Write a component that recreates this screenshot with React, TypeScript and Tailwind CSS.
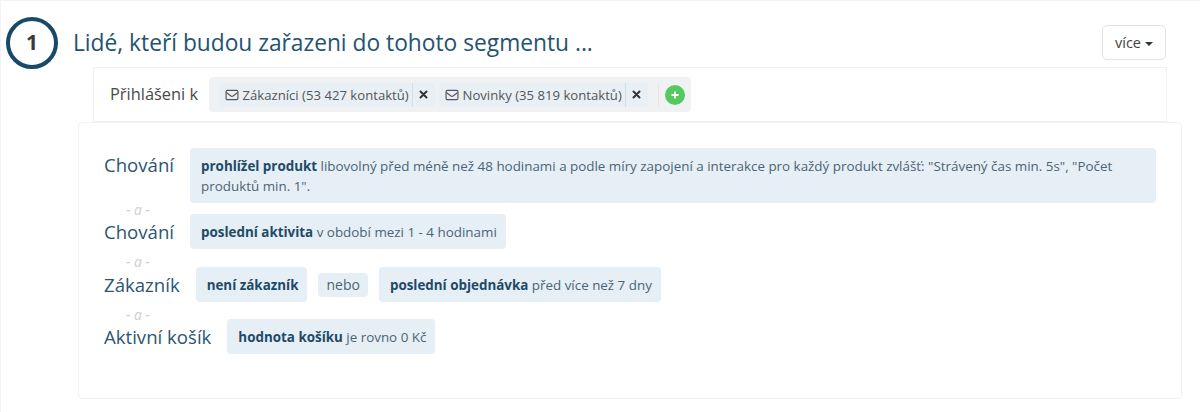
import React from "react";

function Envelope() {
  return (
    <svg width="14" height="14" viewBox="0 0 16 16" fill="none" stroke="#555" strokeWidth="1.3" className="shrink-0">
      <rect x="1.2" y="2.7" width="13.6" height="10.6" rx="1.5" />
      <path d="M1.5 5.2 L6.8 9.2 Q8 10 9.2 9.2 L14.5 5.2" />
    </svg>
  );
}

function Tag({ text, w }: { text: string; w: string }) {
  return (
    <div className={`flex h-[24px] items-center rounded-[3px] bg-[#e8f0f6] pl-[6px] ${w}`}>
      <Envelope />
      <span className="ml-[3.5px] whitespace-nowrap text-[13.15px] leading-[24px] text-[#555]">{text}</span>
      <span className="ml-[3px] h-[24px] w-px bg-[#d5dfe6]" />
      <span className="flex w-[22px] justify-center">
        <svg width="9" height="9" viewBox="0 0 9 9" stroke="#333" strokeWidth="2" strokeLinecap="round">
          <path d="M1.5 1.5 L7.5 7.5 M7.5 1.5 L1.5 7.5" />
        </svg>
      </span>
    </div>
  );
}

function Chip({ children, tall = true }: { children: React.ReactNode; tall?: boolean }) {
  return (
    <div
      className={`rounded-[4px] bg-[#e6eff5] text-[#4b6475] ${
        tall ? "py-[7.5px] pr-[9px] pl-[11px] text-[13.4px] leading-[20px]" : "px-[8px] py-[2px] text-[14px] leading-[20px]"
      }`}
    >
      {children}
    </div>
  );
}

const B = ({ children }: { children: React.ReactNode }) => (
  <b className="font-bold text-[#1e4a68]">{children}</b>
);

function And({ h }: { h: string }) {
  return (
    <div className={`flex w-[68px] items-center justify-center overflow-visible text-[14px] italic text-[#cfcfcf] ${h}`}>
      - a -
    </div>
  );
}

export default function App() {
  return (
    <div
      className="h-[412px] w-[1200px] overflow-hidden border-t border-l border-[#f3f3f3] bg-white pr-[18px] pl-[77px]"
      style={{ fontFamily: '"Open Sans", sans-serif' }}
    >
      <div className="relative -ml-[72px] flex h-[66px] items-center pt-[18px]">
        <div className="flex h-[52px] w-[52px] shrink-0 items-center justify-center rounded-full border-[4px] border-[#174a69] text-[21px] font-bold text-[#3a3a3a]">
          1
        </div>
        <div className="-mt-[1px] ml-[15px] text-[22.75px] leading-[30px] whitespace-nowrap text-[#23536f]">
          Lidé, kteří budou zařazeni do tohoto segmentu ...
        </div>
        <div className="absolute top-[24px] left-[1096px] flex h-[35px] w-[64px] items-center justify-center rounded-[5px] border border-[#e3e3e3] text-[14.5px] text-[#444]">
          více
          <span className="mt-[2px] ml-[4px] h-0 w-0 border-x-[4px] border-t-[4px] border-x-transparent border-t-[#333]" />
        </div>
      </div>

      <div className="ml-[15px] flex h-[55px] w-[1074px] items-center border border-[#f1f1f1] pl-[16px]">
        <div className="w-[99px] text-[16.4px] text-[#4a4a4a]">Přihlášeni k</div>
        <div className="flex h-[35px] w-[482px] items-center rounded-[4px] bg-[#f0f1f2] pl-[10px]">
          <Tag text="Zákazníci (53 427 kontaktů)" w="w-[216px]" />
          <div className="w-[4px]" />
          <Tag text="Novinky (35 819 kontaktů)" w="w-[209px]" />
          <div className="ml-[10px] h-[24px] w-px bg-[#e5e6e7]" />
          <div className="ml-[6px] flex h-[20px] w-[20px] items-center justify-center rounded-full bg-[#55c95f]">
            <svg width="8" height="8" viewBox="0 0 8 8" stroke="#fff" strokeWidth="1.8">
              <path d="M4 0.5 V7.5 M0.5 4 H7.5" />
            </svg>
          </div>
        </div>
      </div>

      <div className="h-[277px] w-[1104px] rounded-[4px] border border-[#f1f1f1] pt-[25px] pr-[25px] pl-[25px]">
        <div className="flex items-start gap-[16px]">
          <div className="pt-[4px] text-[18.6px] leading-[25px] whitespace-nowrap text-[#2b5672]">Chování</div>
          <Chip>
            <B>prohlížel produkt</B> libovolný před méně než 48 hodinami a podle míry zapojení a interakce pro každý produkt zvlášť: "Strávený čas min. 5s", "Počet produktů min. 1".
          </Chip>
        </div>
        <And h="h-[11px] pt-[2px]" />
        <div className="flex items-center gap-[16px]">
          <div className="text-[18.6px] leading-[25px] text-[#2b5672]">Chování</div>
          <Chip>
            <B>poslední aktivita</B> v období mezi 1 - 4 hodinami
          </Chip>
        </div>
        <And h="h-[18px] pt-[6px]" />
        <div className="flex items-center">
          <div className="text-[18.6px] leading-[25px] text-[#2b5672]">Zákazník</div>
          <div className="ml-[16px]">
            <Chip>
              <B>není zákazník</B>
            </Chip>
          </div>
          <div className="mx-[11px]">
            <Chip tall={false}>nebo</Chip>
          </div>
          <Chip>
            <B>poslední objednávka</B> před více než 7 dny
          </Chip>
        </div>
        <And h="h-[17px] pt-[8px]" />
        <div className="flex items-center gap-[16px]">
          <div className="text-[18.6px] leading-[25px] text-[#2b5672]">Aktivní košík</div>
          <Chip>
            <B>hodnota košíku</B> je rovno 0 Kč
          </Chip>
        </div>
      </div>
    </div>
  );
}
